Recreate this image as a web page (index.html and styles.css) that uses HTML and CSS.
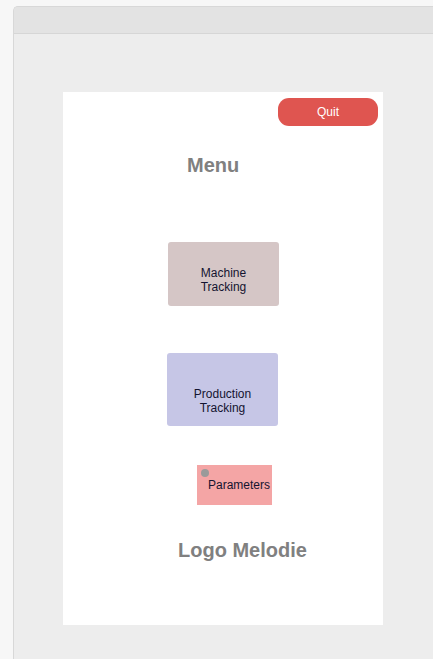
FILE: index.html
```html
<!DOCTYPE html>
<html>
<head>
<meta charset="utf-8">
<link rel="stylesheet" href="styles.css">
</head>
<body>
<div class="window">
  <div class="titlebar"></div>
  <div class="content">
    <div class="card">
      <div class="quit-row"><button class="quit">Quit</button></div>
      <div class="title menu-title">Menu</div>
      <div class="tile machine">Machine<br>Tracking</div>
      <div class="tile production">Production<br>Tracking</div>
      <div class="params"><span class="dot"></span>Parameters</div>
      <div class="title logo">Logo Melodie</div>
    </div>
  </div>
</div>
</body>
</html>
```
FILE: styles.css
```css
html, body {
  margin: 0;
  padding: 0;
  height: 100%;
  background: #f7f7f7;
  font-family: "Liberation Sans", Arial, sans-serif;
  overflow: hidden;
}
body {
  box-sizing: border-box;
  padding: 6px 0 0 13px;
}
.window {
  height: 100%;
  box-sizing: border-box;
  border-left: 1px solid #d8d8d8;
  border-top: 1px solid #d8d8d8;
  border-top-left-radius: 5px;
  background: #e3e3e3;
  display: flex;
  flex-direction: column;
  overflow: hidden;
}
.titlebar {
  height: 26px;
  flex: none;
  background: #e3e3e3;
  border-bottom: 1px solid #d6d6d6;
}
.content {
  flex: 1;
  background: #ededed;
  padding: 58px 0 0 49px;
}
.card {
  width: 320px;
  height: 533px;
  background: #ffffff;
  display: flex;
  flex-direction: column;
  align-items: flex-start;
}
.quit-row {
  align-self: stretch;
  display: flex;
  justify-content: flex-end;
  padding: 6px 5px 0 0;
}
.quit {
  width: 100px;
  height: 28px;
  border: none;
  border-radius: 11px;
  background: #df5550;
  color: #ffffff;
  font-family: "Liberation Sans", Arial, sans-serif;
  font-size: 12px;
  padding: 0;
}
.title {
  font-size: 20px;
  font-weight: bold;
  line-height: 24px;
  color: #808080;
}
.menu-title {
  margin: 27px 0 0 124px;
}
.tile {
  width: 111px;
  box-sizing: border-box;
  border-radius: 3px;
  text-align: center;
  font-size: 12px;
  line-height: 14px;
  color: #141430;
}
.machine {
  margin: 65px 0 0 105px;
  height: 64px;
  padding-top: 24px;
  background: #d5c6c6;
}
.production {
  margin: 47px 0 0 104px;
  height: 73px;
  padding-top: 34px;
  background: #c6c6e6;
}
.params {
  position: relative;
  margin: 39px 0 0 134px;
  width: 75px;
  height: 40px;
  box-sizing: border-box;
  padding: 13px 0 0 11px;
  background: #f4a5a5;
  font-size: 12px;
  line-height: 14px;
  color: #141430;
  white-space: nowrap;
}
.dot {
  position: absolute;
  left: 4px;
  top: 4px;
  width: 8px;
  height: 8px;
  border-radius: 50%;
  background: #9a9a9a;
}
.logo {
  margin: 33px 0 0 115px;
}
```
